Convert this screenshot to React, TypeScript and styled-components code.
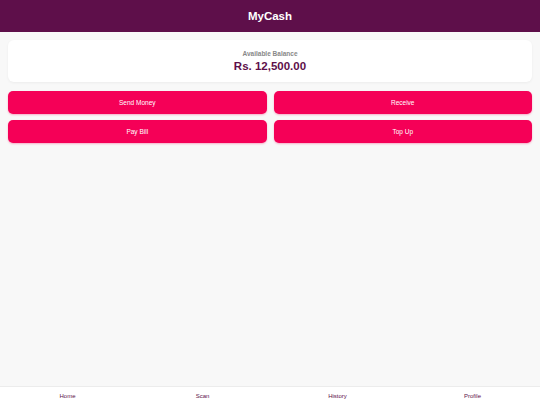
import React from 'react';
import styled, { createGlobalStyle } from 'styled-components';

const GlobalStyle = createGlobalStyle`
  html, body {
    margin: 0;
    padding: 0;
    height: 100%;
  }

  body {
    font-family: "Liberation Sans", Arial, sans-serif;
    background: #f8f8f8;
  }

  #root {
    height: 100%;
  }
`;

const Screen = styled.div`
  display: flex;
  flex-direction: column;
  height: 100vh;
  box-sizing: border-box;
`;

const TopBar = styled.header`
  height: 32px;
  flex-shrink: 0;
  background: #5e0f4a;
  color: #fff;
  display: flex;
  align-items: center;
  justify-content: center;

  h1 {
    margin: 0;
    font-size: 11.5px;
    font-weight: bold;
  }
`;

const Main = styled.main`
  flex: 1;
  padding: 8px 8px;
  display: flex;
  flex-direction: column;
  gap: 9px;
`;

const BalanceCard = styled.section`
  background: #fff;
  border-radius: 6px;
  height: 42px;
  box-shadow: 0 1px 3px rgba(0, 0, 0, 0.05);
  display: flex;
  flex-direction: column;
  align-items: center;
  justify-content: center;
  gap: 3px;
`;

const BalanceLabel = styled.div`
  font-size: 6.5px;
  color: #888;
  font-weight: bold;
`;

const BalanceAmount = styled.div`
  font-size: 11.5px;
  font-weight: bold;
  color: #5e0f4a;
`;

const Actions = styled.div`
  display: grid;
  grid-template-columns: 1fr 1fr;
  column-gap: 7px;
  row-gap: 6px;
`;

const ActionButton = styled.button`
  height: 23px;
  border: none;
  border-radius: 5px;
  background: #f50057;
  color: #fff;
  font-family: inherit;
  font-size: 6.5px;
  box-shadow: 0 1px 2px rgba(245, 0, 87, 0.3);
  cursor: pointer;
`;

const BottomNav = styled.nav`
  height: 18px;
  flex-shrink: 0;
  background: #fff;
  border-top: 1px solid #ececec;
  display: grid;
  grid-template-columns: repeat(4, 1fr);
  align-items: center;
`;

const NavItem = styled.a`
  text-align: center;
  font-size: 6px;
  color: #5e0f4a;
  text-decoration: none;
`;

const actions = ['Send Money', 'Receive', 'Pay Bill', 'Top Up'];
const tabs = ['Home', 'Scan', 'History', 'Profile'];

const App = () => {
  return (
    <>
      <GlobalStyle />
      <Screen>
        <TopBar>
          <h1>MyCash</h1>
        </TopBar>
        <Main>
          <BalanceCard>
            <BalanceLabel>Available Balance</BalanceLabel>
            <BalanceAmount>Rs. 12,500.00</BalanceAmount>
          </BalanceCard>
          <Actions>
            {actions.map((label) => (
              <ActionButton key={label}>{label}</ActionButton>
            ))}
          </Actions>
        </Main>
        <BottomNav>
          {tabs.map((tab) => (
            <NavItem key={tab}>{tab}</NavItem>
          ))}
        </BottomNav>
      </Screen>
    </>
  );
};

export default App;
